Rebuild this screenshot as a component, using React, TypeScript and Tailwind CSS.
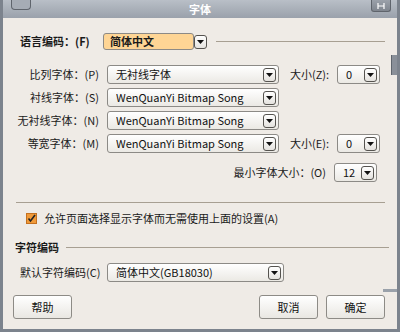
import React from "react";

function Arrow() {
  return (
    <div className="w-[13px] h-[14px] rounded-[3px] border border-[#55534f] bg-gradient-to-b from-white to-[#e4e2de] flex items-center justify-center shrink-0">
      <svg width="7" height="4" viewBox="0 0 7 4">
        <path d="M0 0 H7 L3.5 4 Z" fill="#111" />
      </svg>
    </div>
  );
}

function Combo({ cls, text }: { cls: string; text: string }) {
  return (
    <div
      className={
        "h-[19px] rounded-[3px] border border-[#8c8a86] bg-gradient-to-b from-white to-[#ebe9e4] flex items-center pl-[8px] pr-[2px] " +
        cls
      }
    >
      <span className="flex-1 min-w-0 whitespace-nowrap overflow-hidden text-[11px] leading-[15px] text-[#111]">{text}</span>
      <Arrow />
    </div>
  );
}

function Btn({ text }: { text: string }) {
  return (
    <div className="w-[59px] h-[24px] rounded-[3px] border border-[#8d8b86] bg-gradient-to-b from-white to-[#e9e7e2] flex items-center justify-center text-[11px] text-[#111]">
      {text}
    </div>
  );
}

export default function App() {
  return (
    <div className="w-[400px] h-[332px] relative bg-[#efebe6] font-['Noto_Sans_CJK_SC','Noto_Sans',sans-serif] text-[#1a1a1a] overflow-hidden border-l-[3px] border-r-[3px] border-b-[3px] border-[#7c838d] flex flex-col">
      {/* title bar */}
      <div className="h-[18px] shrink-0 bg-gradient-to-b from-[#b9bfc7] to-[#9aa1ab] flex items-center justify-center relative">
        <span className="text-[11px] font-bold text-white leading-none">字体</span>
        <div className="absolute left-[8px] top-0 w-[20px] h-[10px] rounded-b-[4px] border border-t-0 border-[#5f646c] bg-[#a6acb5]" />
        <div className="absolute right-[6px] top-0 w-[20px] h-[12px] rounded-b-[3px] border border-t-0 border-[#5f646c] bg-gradient-to-b from-[#9ba1aa] to-[#7f858e] flex items-center justify-center">
          <svg width="8" height="6" viewBox="0 0 8 6">
            <path d="M1 0 V6 M7 0 V6 M1 3 H7" stroke="#fff" strokeWidth="1.2" />
          </svg>
        </div>
      </div>

      {/* right side decorations */}
      <div className="absolute right-0 top-[55px] w-[6px] h-[20px] bg-[#8a9099] border-l border-[#5f656d]" />
      <div className="absolute right-0 top-[289px] w-[14px] h-[3px] bg-[#9aa1aa]" />

      <div className="flex flex-col pt-[14px]">
        {/* language row */}
        <div className="flex items-center h-[19px]">
          <span className="ml-[17px] w-[83px] text-[11px] font-bold leading-none">语言编码：(F)</span>
          <div className="w-[91px] h-[17px] rounded-[3px] border border-[#8c8a86] bg-[#fed595] flex items-center pl-[6px]">
            <span className="text-[11px] font-bold leading-none">简体中文</span>
          </div>
          <Arrow />
          <div className="ml-[9px] w-[169px] h-px bg-[#a79f92]" />
        </div>

        {/* font rows */}
        <div className="flex flex-col mt-[14px] gap-[4px]">
          <div className="flex items-center h-[19px]">
            <span className="w-[96px] text-right text-[11px] leading-none">比列字体：(P)</span>
            <Combo cls="ml-[8px] w-[172px]" text="无衬线字体" />
            <span className="ml-[11px] w-[47px] text-[11px] leading-none">大小(Z):</span>
            <Combo cls="w-[43px]" text="0" />
          </div>
          <div className="flex items-center h-[19px]">
            <span className="w-[96px] text-right text-[11px] leading-none">衬线字体：(S)</span>
            <Combo cls="ml-[8px] w-[172px]" text="WenQuanYi Bitmap Song" />
          </div>
          <div className="flex items-center h-[19px]">
            <span className="w-[96px] text-right text-[11px] leading-none">无衬线字体：(N)</span>
            <Combo cls="ml-[8px] w-[172px]" text="WenQuanYi Bitmap Song" />
          </div>
          <div className="flex items-center h-[19px]">
            <span className="w-[96px] text-right text-[11px] leading-none">等宽字体：(M)</span>
            <Combo cls="ml-[8px] w-[172px]" text="WenQuanYi Bitmap Song" />
            <span className="ml-[11px] w-[47px] text-[11px] leading-none">大小(E):</span>
            <Combo cls="w-[43px]" text="0" />
          </div>
          <div className="flex items-center h-[19px] mt-[6px]">
            <span className="w-[331px] pr-[8px] text-right text-[11px] leading-none">最小字体大小：(O)</span>
            <Combo cls="w-[43px]" text="12" />
          </div>
        </div>

        <div className="ml-[13px] mt-[20px] w-[369px] h-px bg-[#a79f92]" />

        {/* checkbox */}
        <div className="flex items-center mt-[9px] ml-[23px] h-[12px]">
          <div className="w-[11px] h-[11px] bg-[#f09a3a] border border-[#c4701f] flex items-center justify-center">
            <svg width="9" height="9" viewBox="0 0 9 9">
              <path d="M1.5 4.5 L3.5 7 L8 1" stroke="#222" strokeWidth="1.6" fill="none" />
            </svg>
          </div>
          <span className="ml-[7px] text-[11px] leading-none">允许页面选择显示字体而无需使用上面的设置(A)</span>
        </div>

        {/* encoding section */}
        <div className="flex items-center mt-[17px] ml-[12px] h-[12px]">
          <span className="text-[11px] font-bold leading-none">字符编码</span>
          <div className="ml-[7px] w-[323px] h-px bg-[#a79f92]" />
        </div>
        <div className="flex items-center mt-[10px] h-[19px]">
          <span className="ml-[17px] w-[87px] text-[11px] leading-none">默认字符编码(C)</span>
          <Combo cls="w-[177px]" text="简体中文(GB18030)" />
        </div>

        {/* buttons */}
        <div className="flex items-center mt-[13px] ml-[10px]">
          <Btn text="帮助" />
          <div className="flex-1" />
          <Btn text="取消" />
          <div className="ml-[8px] mr-[12px]">
            <Btn text="确定" />
          </div>
        </div>
      </div>
    </div>
  );
}
